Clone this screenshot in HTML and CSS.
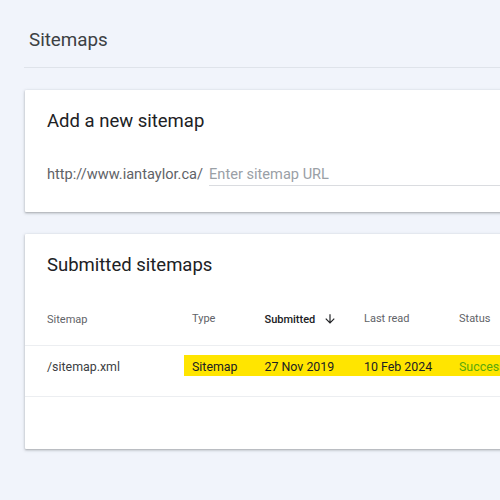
FILE: index.html
```html
<!DOCTYPE html>
<html lang="en">
<head>
<meta charset="utf-8">
<title>Sitemaps</title>
<link rel="stylesheet" href="styles.css">
</head>
<body>
<main class="page">
  <header class="page-header">
    <h1 class="page-title">Sitemaps</h1>
  </header>

  <section class="card add-card">
    <h2 class="card-title">Add a new sitemap</h2>
    <div class="url-row">
      <span class="url-prefix">http://www.iantaylor.ca/</span>
      <input class="url-input" type="text" placeholder="Enter sitemap URL">
    </div>
  </section>

  <section class="card list-card">
    <h2 class="card-title">Submitted sitemaps</h2>
    <div class="table">
      <div class="row head-row">
        <div class="cell c-sitemap">Sitemap</div>
        <div class="rest">
          <div class="cell c-type">Type</div>
          <div class="cell c-sub sorted">Submitted
            <svg class="sort-icon" viewBox="0 0 24 24" width="14" height="14"><path d="M20 12l-1.41-1.41L13 16.17V4h-2v12.17l-5.58-5.59L4 12l8 8 8-8z" fill="#202124"/></svg>
          </div>
          <div class="cell c-read">Last read</div>
          <div class="cell c-status">Status</div>
        </div>
      </div>
      <div class="row data-row">
        <div class="cell c-sitemap">/sitemap.xml</div>
        <div class="rest highlight">
          <div class="cell c-type">Sitemap</div>
          <div class="cell c-sub">27 Nov 2019</div>
          <div class="cell c-read">10 Feb 2024</div>
          <div class="cell c-status success">Success</div>
        </div>
      </div>
    </div>
    <div class="table-foot"></div>
  </section>
</main>
</body>
</html>
```

FILE: styles.css
```css
html, body {
  margin: 0;
  padding: 0;
  background: #f1f4fb;
  overflow: hidden;
}
body {
  font-family: Roboto, "Liberation Sans", Arial, sans-serif;
  color: #202124;
  width: 500px;
  height: 500px;
}
.page {
  padding-left: 24px;
  width: 540px;
}
.page-header {
  border-bottom: 1px solid #dfe3ea;
  padding-left: 5px;
  box-sizing: border-box;
  height: 68px;
}
.page-title {
  margin: 0;
  padding-top: 27px;
  font-size: 18.8px;
  line-height: 26px;
  font-weight: 400;
  color: #3c4043;
}
.card {
  margin-left: 1px;
  background: #fff;
  box-shadow: 0 1px 2px rgba(60,64,67,.3), 0 1px 3px 1px rgba(60,64,67,.12);
  border-radius: 1px;
}
.add-card {
  margin-top: 22px;
  padding: 16px 22px 26px;
}
.card-title {
  margin: 0;
  font-size: 18.5px;
  line-height: 28px;
  font-weight: 400;
  color: #202124;
  padding-top: 1px;
  height: 27px;
}
.url-row {
  margin-top: 28px;
  display: flex;
  align-items: flex-end;
}
.url-prefix {
  font-size: 14.6px;
  line-height: 22px;
  color: #5f6368;
  padding-bottom: 1px;
}
.url-input {
  flex: 1;
  margin-left: 6px;
  border: none;
  border-bottom: 1px solid #dadce0;
  background: transparent;
  font-family: Roboto, "Liberation Sans", Arial, sans-serif;
  font-size: 14.6px;
  height: 23px;
  padding: 0;
  outline: none;
  color: #202124;
}
.url-input::placeholder {
  color: #9aa0a6;
}
.list-card {
  margin-top: 22px;
  padding-top: 16px;
}
.list-card .card-title {
  padding-left: 22px;
  padding-right: 22px;
}
.table {
  margin-top: 15px;
}
.row {
  display: flex;
  padding-left: 22px;
  border-bottom: 1px solid #eceef1;
}
.head-row {
  height: 52px;
  align-items: center;
  font-size: 11px;
  color: #5f6368;
}
.data-row {
  padding-top: 9px;
  padding-bottom: 20px;
  align-items: flex-start;
  font-size: 12.4px;
  color: #3c4043;
}
.cell {
  white-space: nowrap;
}
.c-sitemap { width: 137px; flex: none; }
.rest {
  display: flex;
  flex: 1;
  padding-left: 8px;
}
.c-type { width: 72.5px; flex: none; }
.c-sub { width: 99.5px; flex: none; display: flex; align-items: center; }
.c-read { width: 95px; flex: none; }
.c-status { flex: 1; }
.data-row .cell { line-height: 21px; padding-top: 1px; height: 20px; }
.highlight {
  background: #ffe500;
  height: 21px;
}
.highlight .cell { color: #202124; }
.sorted {
  color: #202124;
  font-weight: 500;
}
.sort-icon {
  margin-left: 8px;
}
.highlight .success {
  color: #5aa80c;
}
.table-foot {
  height: 52px;
}
```
